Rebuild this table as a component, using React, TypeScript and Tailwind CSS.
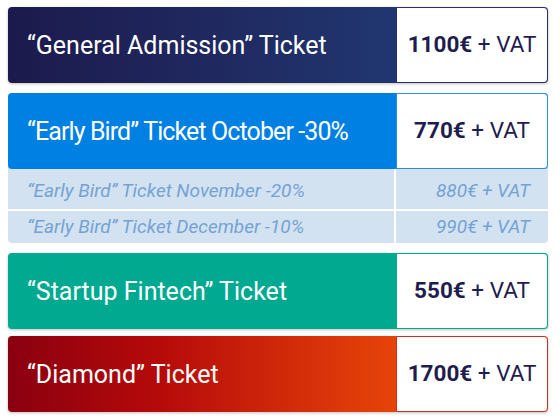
import { FC } from "react";

type Ticket = {
  title: string;
  price: string;
  bg: string;
  border: string;
};

const Price: FC<{ price: string }> = ({ price }) => (
  <span className="text-[22.5px] text-[#1f1d4f]">
    <span className="font-bold">{price}</span> + VAT
  </span>
);

const TicketRow: FC<{ ticket: Ticket }> = ({ ticket }) => (
  <div className={`flex h-[76px] rounded-[4px] shadow-[0_1px_3px_rgba(0,0,0,0.25)] ${ticket.bg}`}>
    <div className="flex flex-1 items-center pl-[19px] pt-[2px] text-[25px] text-white">{ticket.title}</div>
    <div className={`flex w-[152px] items-center justify-center rounded-r-[4px] border bg-white ${ticket.border}`}>
      <Price price={ticket.price} />
    </div>
  </div>
);

const App: FC = () => {
  const general: Ticket = {
    title: "“General Admission” Ticket",
    price: "1100€",
    bg: "bg-gradient-to-r from-[#1c1a4d] to-[#21427f]",
    border: "border-[#2a2f63]",
  };
  const startup: Ticket = {
    title: "“Startup Fintech” Ticket",
    price: "550€",
    bg: "bg-[#00a98f]",
    border: "border-[#00a98f]",
  };
  const diamond: Ticket = {
    title: "“Diamond” Ticket",
    price: "1700€",
    bg: "bg-[linear-gradient(to_right,#8a0010_0%,#b60a0a_28%,#dc380a_62%,#ff6600_100%)]",
    border: "border-[#c8302a]",
  };

  return (
    <div className="h-[419px] w-[560px] bg-white pl-[8px] pr-[12px] pt-[7px] font-['Roboto',sans-serif]">
      <TicketRow ticket={general} />

      <div className="mt-[10px] rounded-[4px] bg-[#d3e2f1]">
        <div className="flex h-[76px] rounded-[4px] bg-[#0080e2]">
          <div className="flex flex-1 items-center pl-[19px] pt-[2px] text-[25px] tracking-[-0.9px] text-white">
            “Early Bird” Ticket October -30%
          </div>
          <div className="flex w-[152px] items-center justify-center rounded-r-[4px] border border-[#2a8ee6] bg-white">
            <Price price="770€" />
          </div>
        </div>
        <div className="flex h-[42px] border-b-2 border-white text-[19px] italic text-[#74a3d3]">
          <div className="flex flex-1 items-center border-r-2 border-white pl-[19px] pt-[4px]">
            “Early Bird” Ticket November -20%
          </div>
          <div className="flex w-[152px] items-center justify-end pr-[18px] pt-[4px]">880€ + VAT</div>
        </div>
        <div className="flex h-[32px] text-[19px] italic text-[#74a3d3]">
          <div className="flex flex-1 items-center border-r-2 border-white pl-[19px]">
            “Early Bird” Ticket December -10%
          </div>
          <div className="flex w-[152px] items-center justify-end pr-[18px]">990€ + VAT</div>
        </div>
      </div>

      <div className="mt-[10px]">
        <TicketRow ticket={startup} />
      </div>
      <div className="mt-[7px]">
        <TicketRow ticket={diamond} />
      </div>
    </div>
  );
};

export default App;
